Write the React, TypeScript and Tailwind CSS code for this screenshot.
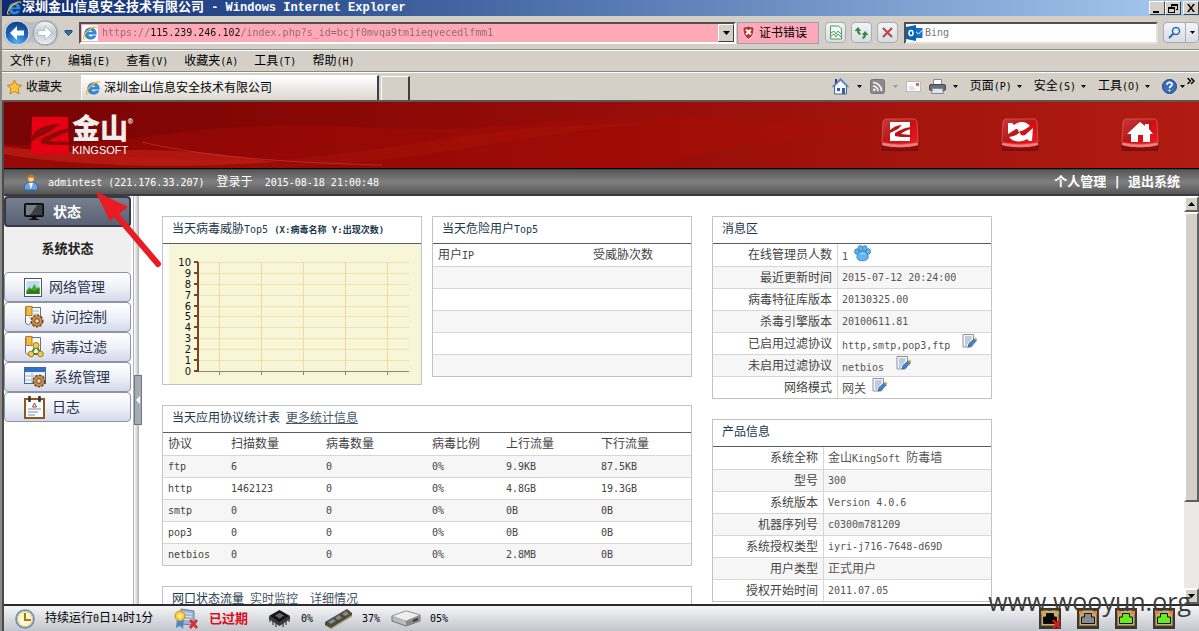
import React from 'react';
import { ChevronsRight } from 'lucide-react';

const menus = ['文件(F)', '编辑(E)', '查看(V)', '收藏夹(A)', '工具(T)', '帮助(H)'];

const protocolHead = ['协议', '扫描数量', '病毒数量', '病毒比例', '上行流量', '下行流量'];
const protocolRows = [
  ['ftp', '6', '0', '0%', '9.9KB', '87.5KB'],
  ['http', '1462123', '0', '0%', '4.8GB', '19.3GB'],
  ['smtp', '0', '0', '0%', '0B', '0B'],
  ['pop3', '0', '0', '0%', '0B', '0B'],
  ['netbios', '0', '0', '0%', '2.8MB', '0B'],
];

type InfoRow = { label: string; value: string; icon?: React.ReactNode };

// Latin runs are set smaller so that two of them fill one Chinese character
const Mix: React.FC<{ text: string }> = ({ text }) => (
  <span className="whitespace-pre">
    {text.split(/([\x20-\x7e]+)/).map((part, i) =>
      i % 2 ? <span key={i} className="text-[10px]">{part}</span> : part
    )}
  </span>
);

const Caret: React.FC<{ dim?: boolean }> = ({ dim }) => (
  <svg width="5" height="3" viewBox="0 0 5 3" className={dim ? 'text-[#999]' : 'text-black'}>
    <path d="M0 0h5L2.500 3z" fill="currentColor" />
  </svg>
);

const IeLogo = () => (
  <svg width="16" height="16" viewBox="0 0 16 16" className="shrink-0">
    <path d="M8.500 2.800C5 2.800 2.600 5.200 2.600 8.500S5 14.300 8.600 14.300c2.600 0 4.600-1.300 5.500-3.600h-3.400c-.5.700-1.100 1-2 1-1.400 0-2.300-.9-2.400-2.400h8c.3-4-2.200-6.500-5.800-6.500zM6.300 7.300c.2-1.300 1-2 2.200-2s2 .7 2.200 2z" fill="#2f8be0" stroke="#155ea8" strokeWidth=".4" />
    <path d="M1.600 14.600C-.5 12.500 3 6.500 8 3.200 11.500.9 15 .4 15.200 2.300c.1.700-.2 1.500-.5 2.200.2-1.300 0-2-1-2C11.500 2.500 7 5 4.400 8.300 2.400 10.900 1.200 13.500 2.600 13.700c.7.100 1.500-.2 2.400-.6-1.300 1.100-2.600 2.200-3.400 1.500z" fill="#f2b824" />
  </svg>
);

const BackForward = () => (
  <svg width="56" height="28" viewBox="0 0 56 28" className="shrink-0">
    <defs>
      <radialGradient id="back" cx=".5" cy=".9" r=".9">
        <stop offset="0" stopColor="#5db4f2" />
        <stop offset=".5" stopColor="#2068bd" />
        <stop offset="1" stopColor="#123c80" />
      </radialGradient>
      <linearGradient id="fwd" x1="0" x2="0" y1="0" y2="1">
        <stop offset="0" stopColor="#f4f6f8" />
        <stop offset=".5" stopColor="#c2c9d2" />
        <stop offset="1" stopColor="#eef2f6" />
      </linearGradient>
    </defs>
    <path d="M13 1c8 0 8 2 15 2s8-2 15-2a13 13 0 0 1 0 26c-8 0-8-4-15-4s-7 4-15 4A13 13 0 0 1 13 1z" fill="#bdbfc2" />
    <circle cx="14" cy="14" r="12" fill="url(#back)" stroke="#e9eef5" />
    <path d="M14 7l-7 7 7 7v-4.500h7v-5h-7z" fill="#fff" />
    <circle cx="42" cy="14" r="12" fill="url(#fwd)" stroke="#8f969e" />
    <path d="M42 7l7 7-7 7v-4.500h-7v-5h7z" fill="#fff" stroke="#aab2bb" strokeWidth=".8" />
  </svg>
);

const EditIcon = () => (
  <svg width="16" height="15" viewBox="0 0 16 15">
    <path d="M1 .5h10.500V9l-2 4H1z" fill="#f4f7fb" stroke="#8593a8" />
    <path d="M3 3h6.500M3 5h6.500M3 7h5M3 9h3M3 11h2" stroke="#8fa0b8" />
    <path d="M6 13l1-3.500L12 5l2.300 2-5 5z" fill="#3d86d6" stroke="#2c4c78" strokeWidth=".7" />
    <path d="M12 5l1.500-1.500L15.500 5.600 14.300 7z" fill="#e5a53a" />
  </svg>
);

const PawIcon = () => (
  <svg width="17" height="17" viewBox="0 0 17 17">
    <g fill="#62b4ee" stroke="#2a78c2" strokeWidth=".8">
      <ellipse cx="3" cy="6.500" rx="2.400" ry="2.700" />
      <ellipse cx="6.300" cy="3.300" rx="2.300" ry="2.700" />
      <ellipse cx="10.800" cy="3.300" rx="2.300" ry="2.700" />
      <ellipse cx="14.200" cy="6.500" rx="2.400" ry="2.700" />
      <path d="M8.500 6c3.500 0 6.500 3.500 5.500 7-.8 3.500-10 4-11 0C2.300 9.500 5 6 8.500 6z" />
    </g>
    <path d="M6 9.500c1-1.500 4-1.700 5 0" stroke="#c8e8fc" fill="none" />
  </svg>
);

const Gear: React.FC<{ x: number; y: number }> = ({ x, y }) => (
  <g transform={`translate(${x} ${y})`}>
    <circle r="5.500" fill="#b5793a" stroke="#6f4217" strokeWidth="2" strokeDasharray="2.400 1.200" />
    <circle r="5" fill="#c78c4a" />
    <circle r="2.300" fill="#f0dfc4" stroke="#6f4217" />
  </g>
);

const NetworkIcon = () => (
  <svg width="18" height="19" viewBox="0 0 18 19">
    <rect x=".5" y=".5" width="17" height="18" fill="#fdfdfd" stroke="#4c5a63" />
    <rect x="2.500" y="3" width="13" height="13" fill="#b9dcf2" />
    <path d="M2.500 16v-4l3-3 2 2 3-5 2 4 3-1v7z" fill="#4ea52c" />
    <path d="M2.500 14l4-3 4 2 5-3v6h-13z" fill="#2f7a1f" />
  </svg>
);

const AccessIcon = () => (
  <svg width="20" height="22" viewBox="0 0 20 22">
    <path d="M1.500 1.500h15v17h-8l-2-1.500-2 2-3-2z" fill="#fbfbfb" stroke="#6a7480" />
    <path d="M9 5h6M9 8h6M5 12h4" stroke="#9fb1c8" />
    <rect x="2" y=".5" width="6" height="9" fill="#f2b94d" stroke="#b57b1d" />
    <Gear x={13} y={15} />
  </svg>
);

const FilterIcon = () => (
  <svg width="20" height="22" viewBox="0 0 20 22">
    <path d="M1.500 1.500h15v17h-8l-2-1.500-2 2-3-2z" fill="#fbfbfb" stroke="#6a7480" />
    <rect x="2" y=".5" width="6" height="9" fill="#f2b94d" stroke="#b57b1d" />
    <path d="M12 10l-5 8h10z" fill="none" stroke="#3b8a34" strokeWidth="2" />
    <g fill="#f4ca46" stroke="#a1781a">
      <circle cx="12" cy="9.500" r="3" />
      <circle cx="7" cy="18" r="2.800" />
      <circle cx="16.500" cy="18" r="2.800" />
    </g>
  </svg>
);

const SystemIcon = () => (
  <svg width="23" height="22" viewBox="0 0 23 22">
    <rect x=".5" y="1.500" width="21" height="16" fill="#eef3fa" stroke="#44689c" />
    <rect x="1" y="2" width="20" height="4" fill="#2f6fc9" />
    <path d="M1 10h20M1 14h20M8 6v11" stroke="#a8bcd8" />
    <Gear x={15} y={15} />
  </svg>
);

const LogIcon = () => (
  <svg width="21" height="23" viewBox="0 0 21 23">
    <rect x="1" y="3" width="19" height="19" fill="#fcfcfc" stroke="#8a5a20" strokeWidth="2" />
    <path d="M5.500 0v6M15.500 0v6" stroke="#333" strokeWidth="2.500" />
    <path d="M10.500 7l-2 4h4z" fill="none" stroke="#b03428" />
    <path d="M4 13h13M4 16h10M4 19h7" stroke="#6f8fb5" />
  </svg>
);

const MonitorIcon = () => (
  <svg width="20" height="18" viewBox="0 0 20 18">
    <rect x=".5" y=".5" width="19" height="13" rx="1" fill="#191a1c" stroke="#08090a" />
    <rect x="2" y="2" width="16" height="10" fill="#3b3f44" />
    <path d="M2 2h11L6 12H2z" fill="#777d84" />
    <path d="M8 14h4l1 2h2v1H5v-1h2z" fill="#111" />
  </svg>
);

const sideItems = [
  { label: '网络管理', icon: <NetworkIcon /> },
  { label: '访问控制', icon: <AccessIcon /> },
  { label: '病毒过滤', icon: <FilterIcon /> },
  { label: '系统管理', icon: <SystemIcon /> },
  { label: '日志', icon: <LogIcon /> },
];

const messageRows: InfoRow[] = [
  { label: '在线管理员人数', value: '1 ', icon: <PawIcon /> },
  { label: '最近更新时间', value: '2015-07-12 20:24:00' },
  { label: '病毒特征库版本', value: '20130325.00' },
  { label: '杀毒引擎版本', value: '20100611.81' },
  { label: '已启用过滤协议', value: 'http,smtp,pop3,ftp  ', icon: <EditIcon /> },
  { label: '未启用过滤协议', value: 'netbios  ', icon: <EditIcon /> },
  { label: '网络模式', value: '网关 ', icon: <EditIcon /> },
];

const productRows: InfoRow[] = [
  { label: '系统全称', value: '金山KingSoft 防毒墙' },
  { label: '型号', value: '300' },
  { label: '系统版本', value: 'Version 4.0.6' },
  { label: '机器序列号', value: 'c0300m781209' },
  { label: '系统授权类型', value: 'iyri-j716-7648-d69D' },
  { label: '用户类型', value: '正式用户' },
  { label: '授权开始时间', value: '2011.07.05' },
];

const Panel: React.FC<{ title: React.ReactNode; className?: string; children?: React.ReactNode }> = ({ title, className = '', children }) => (
  <section className={`border border-[#c3c3c3] bg-white ${className}`}>
    <h2 className="h-[27px] border-b border-[#5c5c64] px-[9px] leading-6 text-[#22384c]">{title}</h2>
    {children}
  </section>
);

const rowClass = 'even:bg-[#f6f6f6] [&:not(:first-child)>*]:border-t [&>*]:border-[#d6d6d6]';

const InfoTable: React.FC<{ rows: InfoRow[]; labelClass: string }> = ({ rows, labelClass }) => (
  <table className="w-full table-fixed border-separate border-spacing-0 text-[#555]">
    <tbody>
      {rows.map(row => (
        <tr key={row.label} className={rowClass}>
          <th className={`h-[22px] border-r p-0 pr-[5px] text-right font-normal text-[#444] ${labelClass}`}>{row.label}</th>
          <td className="h-[22px] p-0 pl-1">
            <div className={row.icon ? 'flex h-5 items-end' : 'flex h-5 items-center'}>
              <Mix text={row.value} />
              {row.icon && <a href="#" aria-label={row.label} className="self-start">{row.icon}</a>}
            </div>
          </td>
        </tr>
      ))}
    </tbody>
  </table>
);

const VirusChart = () => {
  const ticks = [0, 1, 2, 3, 4, 5, 6, 7, 8, 9, 10];
  const y = (n: number) => 127 - Math.round(n * 10.9);
  return (
    <svg width="252" height="140" viewBox="0 0 252 140" className="ml-auto block bg-[#f8f6d8]" shapeRendering="crispEdges">
      {ticks.slice(1).map(n => <path key={n} d={`M30 ${y(n) + 0.5}h210`} stroke="#f5dfa8" />)}
      {[51, 93, 135, 177, 219].map(x => (
        <g key={x}>
          <path d={`M${x - 0.5} 18v109`} stroke="#f3d9a0" />
          <path d={`M${x - 0.5} 128v3`} stroke="#888878" />
        </g>
      ))}
      <path d="M30 127.500h210" stroke="#888878" />
      <path d="M29 18v110" stroke="#7a4420" strokeWidth="2" />
      {ticks.map(n => (
        <g key={n}>
          <path d={`M25 ${y(n)}h4`} stroke="#7a4420" strokeWidth="2" />
          <text x="22" y={y(n) + 4} textAnchor="end" fontSize="10" fill="#111" className="font-['DejaVu_Sans']">{n}</text>
        </g>
      ))}
    </svg>
  );
};

const TitleBar = () => (
  <div className="flex h-4 items-center bg-linear-to-r from-[#0d2a72] to-[#a6caf0] pl-1 font-bold text-white">
    <IeLogo />
    <h1 className="flex-1 font-['Liberation_Mono','Noto_Sans_CJK_SC',monospace] text-[13px] leading-4 whitespace-pre">
      深圳金山信息安全技术有限公司<span className="text-xs"> - Windows Internet Explorer</span>
    </h1>
    {['M2 9h6v2H2z', 'M4 2h7v6H9V7h1V4H5v1H4zM1 5h7v6H1zM2 7v3h5V7z', 'M2 2h2l2 3 2-3h2L7 6l3 4H8L6 7l-2 3H2l3-4z'].map((d, i) => (
      <button key={i} aria-label={['最小化', '还原', '关闭'][i]} className="flex h-[14px] w-4 items-center justify-center border border-t-white border-r-[#404040] border-b-[#404040] border-l-white bg-[#d4d0c8] last:ml-[2px]">
        <svg width="12" height="12" viewBox="0 0 12 12"><path d={d} fillRule="evenodd" /></svg>
      </button>
    ))}
  </div>
);

const toolButton = 'flex h-[21px] w-[21px] items-center justify-center rounded-sm border border-[#a5adba] bg-linear-to-b from-[#f2f4f7] to-[#d9dde2]';

const NavBar = () => (
  <div className="flex h-[34px] items-center border-b border-[#8a8a84] pl-[1px]">
    <BackForward />
    <button aria-label="历史" className="mx-[5px]">
      <svg width="9" height="6" viewBox="0 0 9 6"><path d="M1 .5h7v1.500L4.500 5.500 1 2z" fill="#2a78a8" stroke="#174b7c" /></svg>
    </button>
    <div className="ml-[1px] flex h-[22px] flex-1 items-center border-2 border-t-[#505050] border-r-white border-b-white border-l-[#505050] bg-[#ffa9b8]">
      <span className="ml-[1px] flex h-4 w-4 items-center bg-white"><IeLogo /></span>
      <input
        aria-label="地址"
        defaultValue="https://115.239.246.102/index.php?s_id=bcjf0mvqa9tm1ieqvecedlfmm1"
        className="ml-1 h-4 min-w-0 flex-1 bg-[linear-gradient(90deg,#8d6b72_48px,#111_48px,#111_138px,#8d6b72_138px)] bg-clip-text text-[10px] leading-4 text-transparent outline-none"
      />
      <button aria-label="展开地址" className="flex h-[18px] w-4 items-center justify-center border border-t-white border-r-[#404040] border-b-[#404040] border-l-white bg-[#d4d0c8]">
        <svg width="7" height="4" viewBox="0 0 7 4"><path d="M0 0h7L3.500 4z" /></svg>
      </button>
    </div>
    <button className="ml-[1px] flex h-[22px] w-[82px] items-center border border-[#98a0b8] bg-[#ffa9b8] pl-[3px]">
      <svg width="15" height="15" viewBox="0 0 15 15" className="mr-[3px] shrink-0">
        <path d="M7.500.8c2 1 4 1.200 5.500 1 .5 6-1 10-5.500 12.400C3 11.800 1.500 7.800 2 1.800c1.500.2 3.500 0 5.500-1z" fill="#c22f2f" stroke="#f0e0e0" />
        <path d="M5 4.500l5 5M10 4.500l-5 5" stroke="#fff" strokeWidth="2" />
      </svg>
      证书错误
    </button>
    <div className="ml-[6px] flex gap-[5px]">
      <button aria-label="兼容性视图" className={toolButton}>
        <svg width="14" height="15" viewBox="0 0 14 15" fill="none" stroke="#4c9c5c">
          <path d="M1.500 1h8l3 3v10h-11z" fill="#f4fbf4" />
          <path d="M2 8l3-2 2 3 2-3 3 3M2 11l3-2 2 3 2-3 3 3" />
        </svg>
      </button>
      <button aria-label="刷新" className={toolButton}>
        <svg width="15" height="14" viewBox="0 0 15 14" fill="#2f8a3c">
          <path d="M4 1L.5 5H3c0 2 1 3.500 3.500 4V7C5.500 6.500 5.200 6 5.200 5h2z" />
          <path d="M11 5l3.500 4H12c0 2-1 3.500-3.500 4v-2c1-.5 1.300-1 1.300-2h-2z" />
        </svg>
      </button>
      <button aria-label="停止" className={toolButton}>
        <svg width="13" height="13" viewBox="0 0 13 13"><path d="M2 2l9 9M11 2l-9 9" stroke="#b8484a" strokeWidth="2.200" /></svg>
      </button>
    </div>
    <div className="ml-[6px] flex h-[22px] w-[254px] items-center border-2 border-t-[#505050] border-r-[#e4e0d8] border-b-[#e4e0d8] border-l-[#505050] bg-white">
      <svg width="17" height="16" viewBox="0 0 17 16" className="shrink-0">
        <path d="M9 3h7.500v10H9z" fill="#0f72c6" />
        <path d="M9 6l3.500 3L16.500 5" stroke="#fff" fill="none" />
        <path d="M0 2l10-2v16L0 14z" fill="#0a64b4" />
        <ellipse cx="5" cy="8" rx="2" ry="2.600" fill="none" stroke="#fff" strokeWidth="1.500" />
      </svg>
      <input aria-label="搜索" placeholder="Bing" className="ml-[2px] h-4 min-w-0 flex-1 text-[10px] outline-none placeholder:text-[#777]" />
    </div>
    <div className="ml-[5px] flex h-[21px] w-[36px] divide-x divide-[#a5adba] rounded-sm border border-[#a5adba] bg-linear-to-b from-[#f2f4f7] to-[#d9dde2]">
      <button aria-label="查找" className="flex flex-1 items-center justify-center">
        <svg width="13" height="13" viewBox="0 0 13 13" fill="none" stroke="#3068b8">
          <circle cx="8" cy="5" r="3.500" strokeWidth="1.600" fill="#eaf3fd" />
          <path d="M5.500 7.500L1 12" strokeWidth="2" />
        </svg>
      </button>
      <button aria-label="搜索选项" className="flex w-3 items-center justify-center"><Caret /></button>
    </div>
  </div>
);

const MenuBar = () => (
  <nav className="flex h-[22px] items-center gap-4 border-t border-b border-t-white border-b-[#8a8a84] pl-2">
    {menus.map(m => <button key={m}><Mix text={m} /></button>)}
  </nav>
);

const CommandBar = () => (
  <div className="flex h-[30px] items-end border-t border-b-2 border-t-white border-b-[#5e5650]">
    <button className="flex h-full items-center gap-[3px] pl-1">
      <svg width="17" height="16" viewBox="0 0 17 16"><path d="M8.500 1l2.200 4.700 5.100.6-3.800 3.500 1 5.100-4.500-2.500L4 14.900l1-5.100L1.200 6.300l5.100-.6z" fill="#fbc53a" stroke="#c8801a" /></svg>
      收藏夹
    </button>
    <div className="ml-[19px] flex h-[25px] w-[298px] items-center gap-[3px] border-t border-r-2 border-l border-t-white border-r-[#404040] border-l-white bg-linear-to-b from-white to-[#dcd8d0] pl-[3px]">
      <IeLogo />
      深圳金山信息安全技术有限公司
    </div>
    <button aria-label="新选项卡" className="ml-[2px] h-6 w-[29px] border-t border-r-2 border-l border-t-white border-r-[#404040] border-l-white" />
    <div className="ml-auto flex h-full items-center pr-[2px]">
      <button aria-label="主页" className="flex items-center gap-[8px]">
        <svg width="17" height="17" viewBox="0 0 17 17">
          <path d="M2.500 8v8h12V8l-6-6z" fill="#f3f7fc" stroke="#4a6794" />
          <path d="M.5 9L8.500 1l8 8" fill="none" stroke="#5d82b8" strokeWidth="1.500" />
          <path d="M3 1h2v3L3 6z" fill="#37358c" />
          <path d="M5 10h3v3H5zM10 10h3v6h-3z" fill="#3a5e9c" />
        </svg>
        <Caret />
      </button>
      <button aria-label="源" className="ml-[8px] flex items-center gap-[8px]">
        <svg width="15" height="15" viewBox="0 0 15 15">
          <rect x=".5" y=".5" width="14" height="14" rx="2" fill="#8b8b8b" stroke="#777" />
          <path d="M3 7a5 5 0 0 1 5 5M3 3.500A8.500 8.500 0 0 1 11.500 12" fill="none" stroke="#fff" strokeWidth="1.600" />
          <circle cx="4.300" cy="10.800" r="1.300" fill="#fff" />
        </svg>
        <Caret dim />
      </button>
      <button aria-label="邮件" className="ml-[8px]">
        <svg width="15" height="11" viewBox="0 0 15 11">
          <rect x=".5" y=".5" width="14" height="10" fill="#fafafa" stroke="#bbb" />
          <rect x="10" y="2" width="3" height="3" fill="#d66" />
          <path d="M3 6h5M3 8h6" stroke="#ccc" />
        </svg>
      </button>
      <button aria-label="打印" className="ml-[8px] flex items-center gap-[7px]">
        <svg width="17" height="15" viewBox="0 0 17 15">
          <path d="M4.500.5h8V6h-8z" fill="#fff" stroke="#889" />
          <rect x=".5" y="5.500" width="16" height="6" rx="1.500" fill="#6c7178" stroke="#44484d" />
          <path d="M3.500 9.500h10l1 5h-12z" fill="#dfe6ee" stroke="#889" />
        </svg>
        <Caret />
      </button>
      <div className="ml-[12px] flex gap-[12px]">
        {['页面(P)', '安全(S)', '工具(O)'].map(m => (
          <button key={m} className="flex items-center gap-[5px]"><Mix text={m} /><Caret /></button>
        ))}
        <button aria-label="帮助" className="flex items-center gap-[3px]">
          <svg width="15" height="15" viewBox="0 0 15 15">
            <circle cx="7.500" cy="7.500" r="7" fill="#3a6dbd" stroke="#23457e" />
            <path d="M5 5.700c0-3.200 5-3 5-.2 0 1.700-2.500 1.800-2.500 3.700" fill="none" stroke="#fff" strokeWidth="1.700" />
            <circle cx="7.500" cy="11.500" r="1" fill="#fff" />
          </svg>
          <Caret />
        </button>
      </div>
      <ChevronsRight className="mb-3 h-3 w-3" strokeWidth={3} />
    </div>
  </div>
);

const HeaderButton: React.FC<{ label: string; children: React.ReactNode }> = ({ label, children }) => (
  <button aria-label={label}>
    <svg width="38" height="34" viewBox="0 0 38 34">
      <defs>
        <linearGradient id="key" x1="0" x2="1" y1="0" y2="1">
          <stop offset="0" stopColor="#c93a3a" />
          <stop offset=".48" stopColor="#b81818" />
          <stop offset=".52" stopColor="#d40c14" />
          <stop offset="1" stopColor="#e81c24" />
        </linearGradient>
      </defs>
      <path d="M0 27h38l-1 6H1z" fill="#6d0808" opacity=".7" />
      <path d="M2 2l-1 26c0 2 1 3 3 3h30c2 0 3-1 3-3L36 2z" fill="#8c1010" />
      <path d="M1 25h36v2c-8 3-28 3-36 0z" fill="#f08080" />
      <path d="M4 1h30l2 2 1 21c-8 3-28 3-36 0L2 3z" fill="url(#key)" stroke="#d65a55" strokeWidth=".8" />
      {children}
    </svg>
  </button>
);

const BrandHeader = () => (
  <header className="relative flex h-[67px] items-center overflow-hidden border-b border-black bg-linear-to-r from-[#780404] via-[#960c08] to-[#b01c12] pr-10 pl-[27px]">
    <svg className="absolute inset-0 h-full w-full" viewBox="0 0 1195 66" preserveAspectRatio="none">
      <path d="M0 42C90 48 150 28 260 24 340 20 400 34 520 22 640 12 760 14 900 30 780 34 700 50 640 66H0z" fill="#b00c06" opacity=".35" />
      <path d="M0 46c80 4 160 14 260 12 120-3 210-38 380-36-140 12-240 42-380 44H0z" fill="#c01c10" opacity=".2" />
      <path d="M0 44c60 10 100 4 140 4 50 0 90 6 130 12-80 6-190 6-270-8z" fill="#ea3424" opacity=".35" />
      <path d="M138 40c50 12 120 20 240 23" stroke="#e0584c" fill="none" opacity=".4" />
    </svg>
    <a href="#" className="relative mt-[2px] flex items-center gap-[3px] text-white">
      <svg width="38" height="38" viewBox="0 0 38 38">
        <path d="M1 0h36l1 37H0z" fill="#e60012" />
        <path d="M0 21C5 12 14 7 29 7c-3 3-7 4-9 7L8 20c-3 1-5 3-8 5z" fill="#8c0a08" />
        <path d="M10 22c9-4 16-9 28-11v4c-9 2-15 6-20 9l20 1v3c-12 0-23 0-28-2z" fill="#8c0a08" />
      </svg>
      <span className="flex flex-col">
        <span className="flex items-start text-[28px] leading-7 font-black text-[#eee]">金山<sup className="top-0 text-[8px] leading-3">®</sup></span>
        <span className="font-['Liberation_Sans',sans-serif] text-[11px] leading-3">KINGSOFT</span>
      </span>
    </a>
    <div className="relative ml-auto flex gap-[82px]">
      <HeaderButton label="金山">
        <path d="M9 4h20v19H9z" fill="#fff" />
        <path d="M8 13c4-4 8-6 13-6l-4 4-8 4zM14 15c4-2 8-5 16-6v2c-5 1-8 3-10 5l10 1v2c-7 0-13 0-16-1z" fill="#b81414" />
      </HeaderButton>
      <HeaderButton label="刷新">
        <path d="M7 5h4l2 2c5-4 12-4 16 1-5 4-9 5-12 6 1-2 0-3-2-3l-8 5z" fill="#fff" />
        <path d="M32 10l-1 13h-3l-2-2c-5 4-15 3-18-2 5-1 8-2 11-5 0 3 2 4 5 3z" fill="#fff" />
      </HeaderButton>
      <HeaderButton label="首页">
        <path d="M6 16L19 4l5 4V6h4v5l4 5h-3v8h-7v-7h-5v7h-7v-8z" fill="#fff" />
      </HeaderButton>
    </div>
  </header>
);

const UserBar = () => (
  <div className="flex h-[27px] items-center border-t border-b-2 border-t-[#44444c] border-b-[#3c3c3c] bg-linear-to-b from-[#575757] via-[#808080] to-[#555] pr-[19px] pl-5 text-white">
    <svg width="14" height="17" viewBox="0 0 14 17" className="mr-[10px]">
      <path d="M.5 16c-.5-5 1-8 6.500-8s7 3 6.500 8z" fill="#6ba6e4" stroke="#2e67ab" />
      <path d="M5 9l2 6 2-6z" fill="#fff" />
      <circle cx="7" cy="5" r="3.500" fill="#f4cf9c" stroke="#94601c" />
      <path d="M3 5c0-6 8-6 8 0-2-2-6-2-8 0z" fill="#b87a2a" />
    </svg>
    <Mix text="admintest (221.176.33.207)  登录于  2015-08-18 21:00:48" />
    <div className="ml-auto flex gap-[7px] text-[13px] font-bold">
      <a href="#">个人管理</a>
      <span>|</span>
      <a href="#">退出系统</a>
    </div>
  </div>
);

const Sidebar = () => (
  <aside className="w-[127px] shrink-0">
    <button className="flex h-[31px] w-full items-center gap-[9px] rounded-sm border-2 border-[#353a48] bg-linear-to-b from-[#777f90] to-[#596275] pl-[18px] text-[14px] font-bold text-white">
      <MonitorIcon />
      状态
    </button>
    <a href="#" className="block h-[45px] bg-[#efefef] text-center text-[13px] leading-[44px] font-bold text-[#222]">系统状态</a>
    {sideItems.map(item => (
      <button key={item.label} className="flex h-[30px] w-full items-center gap-[7px] rounded-sm border border-[#8d93a8] bg-linear-to-b from-white via-[#f0f1f8] to-[#d5d9ea] pl-[19px] text-[14px] text-[#2c3550]">
        {item.icon}
        {item.label}
      </button>
    ))}
  </aside>
);

const Splitter = () => (
  <div className="relative flex w-[10px] shrink-0 justify-center">
    <div className="w-[6px] border-r border-l border-[#b4b4b8] bg-linear-to-r from-white to-[#c6c6ca]" />
    <button aria-label="收起" className="absolute top-[179px] left-[3px] flex h-[50px] w-2 items-center justify-center border border-[#717780] bg-[#a3abb4]">
      <svg width="4" height="8" viewBox="0 0 4 8"><path d="M4 0v8L0 4z" fill="#fff" /></svg>
    </button>
  </div>
);

const scrollButton = 'flex h-4 w-full items-center justify-center border-2 border-t-white border-r-[#606060] border-b-[#606060] border-l-white bg-[#d4d0c8]';

const ScrollBar = () => (
  <div className="flex w-[15px] shrink-0 flex-col bg-[#ebe9e5]">
    <button aria-label="向上" className={scrollButton}>
      <svg width="7" height="4" viewBox="0 0 7 4"><path d="M0 4h7L3.500 0z" /></svg>
    </button>
    <div className="flex flex-1 flex-col">
      <div className="h-[77%] border-2 border-t-white border-r-[#606060] border-b-[#606060] border-l-white bg-[#d4d0c8]" />
    </div>
    <button aria-label="向下" className={scrollButton}>
      <svg width="7" height="4" viewBox="0 0 7 4"><path d="M0 0h7L3.500 4z" /></svg>
    </button>
  </div>
);

const Dashboard = () => (
  <main className="flex min-w-0 flex-1 items-start gap-5 overflow-hidden pt-5 pl-[21px]">
    <div className="flex w-[530px] shrink-0 flex-col gap-5">
      <div className="flex items-start gap-[10px]">
        <Panel
          className="flex-1"
          title={<><Mix text="当天病毒威胁Top5 " /><span className="text-[9px] font-bold">(X:病毒名称 Y:出现次数)</span></>}
        >
          <VirusChart />
        </Panel>
        <Panel className="flex-1" title={<Mix text="当天危险用户Top5" />}>
          <table className="w-full table-fixed border-separate border-spacing-0 text-left text-[#444]">
            <tbody>
              <tr className={rowClass}>
                <th className="h-[22px] w-[155px] p-0 pl-[5px] font-normal"><Mix text="用户IP" /></th>
                <th className="h-[22px] p-0 pl-[5px] font-normal">受威胁次数</th>
              </tr>
              {[1, 2, 3, 4, 5].map(n => (
                <tr key={n} className={rowClass}><td colSpan={2} className="h-[22px] p-0" /></tr>
              ))}
            </tbody>
          </table>
        </Panel>
      </div>
      <Panel title={<>当天应用协议统计表<a href="#" className="ml-[6px] text-[#445566] underline">更多统计信息</a></>}>
        <table className="w-full table-fixed border-separate border-spacing-0 text-left text-[#444]">
          <colgroup>
            <col className="w-[63px]" />
            <col className="w-[95px]" />
            <col className="w-[106px]" />
            <col className="w-[74px]" />
            <col className="w-[95px]" />
            <col />
          </colgroup>
          <tbody>
            <tr className={rowClass}>
              {protocolHead.map(h => <th key={h} className="h-[22px] p-0 pl-[5px] font-normal">{h}</th>)}
            </tr>
            {protocolRows.map(row => (
              <tr key={row[0]} className={rowClass}>
                {row.map((cell, i) => <td key={i} className="h-[22px] p-0 pl-[5px] text-[10px]">{cell}</td>)}
              </tr>
            ))}
          </tbody>
        </table>
      </Panel>
      <Panel
        title={
          <>
            网口状态流量
            <a href="#" className="ml-[6px] text-[#445566] underline">实时监控</a>
            <a href="#" className="ml-3 text-[#445566] underline">详细情况</a>
          </>
        }
      />
    </div>
    <div className="flex w-[280px] shrink-0 flex-col gap-5">
      <Panel title="消息区"><InfoTable rows={messageRows} labelClass="w-[125px]" /></Panel>
      <Panel title="产品信息"><InfoTable rows={productRows} labelClass="w-[111px]" /></Panel>
    </div>
  </main>
);

const PortIcon: React.FC<{ fill: string; down?: boolean }> = ({ fill, down }) => (
  <svg width="22" height="21" viewBox="0 0 22 21">
    <rect width="22" height="21" fill="#3a3830" />
    <rect x="2.500" y="2.500" width="17" height="15" fill="#c6ad74" stroke="#8c7a4c" />
    <path d="M2 3h4v3H2zM16 3h4v3h-4z" fill={down ? '#e0a030' : '#f08030'} />
    <path d="M4.500 15.500V9h3V5.500h7V9h3v6.500z" fill={fill} stroke="#111" />
    {down && <path d="M14 12l7 8M21 12l-7 8" stroke="#e01818" strokeWidth="2.500" />}
  </svg>
);

const StatusBar = () => (
  <footer className="flex h-[27px] shrink-0 items-center border-t-2 border-[#2c2c30] bg-linear-to-b from-[#f6f6f8] to-[#c2c5cc] pr-6 pl-[11px]">
    <svg width="20" height="20" viewBox="0 0 20 20" className="mr-[10px]">
      <circle cx="10" cy="10" r="9" fill="#fbf6d8" stroke="#5f8fc8" strokeWidth="1.600" />
      <circle cx="10" cy="10" r="7.500" fill="none" stroke="#e8b840" />
      <path d="M10 4v7h6" fill="none" stroke="#a87a10" strokeWidth="2" />
    </svg>
    <span className="w-[129px] text-black"><Mix text="持续运行0日14时1分" /></span>
    <svg width="25" height="22" viewBox="0 0 25 22" className="mr-[10px]">
      <path d="M7 1l13 2v14L7 16z" fill="#9fb2d4" stroke="#6a7fa8" />
      <path d="M10 5l8 1M10 8l8 1M10 11l8 1" stroke="#e0e8f5" />
      <path d="M3 10l-1 10 4-2 3 3 1-10z" fill="#4f86cc" />
      <circle cx="6" cy="8" r="5" fill="#f8cf3c" stroke="#c8901c" />
      <circle cx="6" cy="8" r="2" fill="#fff0b0" />
      <path d="M16 12l7 8M23 12l-7 8" stroke="#d83030" strokeWidth="2.800" />
    </svg>
    <strong className="w-[59px] text-[13px] text-[#d8101c]">已过期</strong>
    <svg width="23" height="20" viewBox="0 0 23 20" className="mr-[10px]">
      <path d="M2 8v5M5 10v6M8 12v6M21 8v5M18 10v6M15 12v6" stroke="#555" strokeWidth="1.500" />
      <path d="M1 7l10.500-6L22 7l-10.500 7z" fill="#161616" />
      <path d="M1 7l10.500 7v3L1 10zM22 7l-10.500 7v3L22 10z" fill="#333" />
      <path d="M7 6.500l4.500-2.500L16 6.500l-4.500 3z" fill="#666" />
    </svg>
    <span className="w-6 text-[10px] text-black">0%</span>
    <svg width="27" height="20" viewBox="0 0 27 20" className="mr-[10px]">
      <path d="M0 13L22 0l5 4v3L6 20l-6-4z" fill="#4b4b44" />
      <path d="M0 16l6 3L27 6v2L6 20l-6-3z" fill="#b8ad78" />
      <path d="M3 13l5-3 3 2-5 3zM10 9l4-3 3 3-4 2zM17 5l4-3 3 3-4 2z" fill="#8a8a84" />
    </svg>
    <span className="w-[29px] text-[10px] text-black">37%</span>
    <svg width="30" height="17" viewBox="0 0 30 17" className="mr-[9px]">
      <path d="M1 6L15 1l14 4v6l-14 5L1 11z" fill="#bcbcbc" stroke="#707070" />
      <path d="M1 6l14 5L29 5 15 1z" fill="#eee" stroke="#999" strokeWidth=".6" />
      <path d="M15 11l14-6v6l-14 5z" fill="#8a8a8a" />
      <path d="M22 10l5-2v2l-5 2z" fill="#333" />
    </svg>
    <span className="text-[10px] text-black">05%</span>
    <div className="ml-auto flex gap-4">
      <PortIcon fill="#080808" down />
      <PortIcon fill="#8a8a90" />
      <PortIcon fill="#66ee1c" />
      <PortIcon fill="#66ee1c" />
    </div>
  </footer>
);

const App: React.FC = () => {
  return (
    <div className="relative flex h-screen flex-col overflow-hidden border-l-2 border-[#8c8a86] bg-[#d4d0c8] font-['DejaVu_Sans_Mono','Noto_Sans_CJK_SC',monospace] text-xs leading-4 text-black">
      <TitleBar />
      <NavBar />
      <MenuBar />
      <CommandBar />
      <div className="flex min-h-0 flex-1 flex-col border-l-2 border-[#4a4a4c] bg-white">
        <BrandHeader />
        <UserBar />
        <div className="flex min-h-0 flex-1">
          <Sidebar />
          <Splitter />
          <Dashboard />
          <ScrollBar />
        </div>
        <StatusBar />
      </div>

      {/* Marker pointing at the account name */}
      <svg className="pointer-events-none absolute top-[188px] left-[88px]" width="76" height="82" viewBox="0 0 76 82">
        <path d="M68 76L28 29" stroke="#e81c24" strokeWidth="6" strokeLinecap="round" />
        <path d="M5 3l33 16-18 14z" fill="#e81c24" />
      </svg>
      <div className="pointer-events-none absolute right-2 bottom-3.5 font-['Open_Sans',sans-serif] text-[25px] leading-8 text-[#3c3c3c]">www.wooyun.org</div>
    </div>
  );
};

export default App;
